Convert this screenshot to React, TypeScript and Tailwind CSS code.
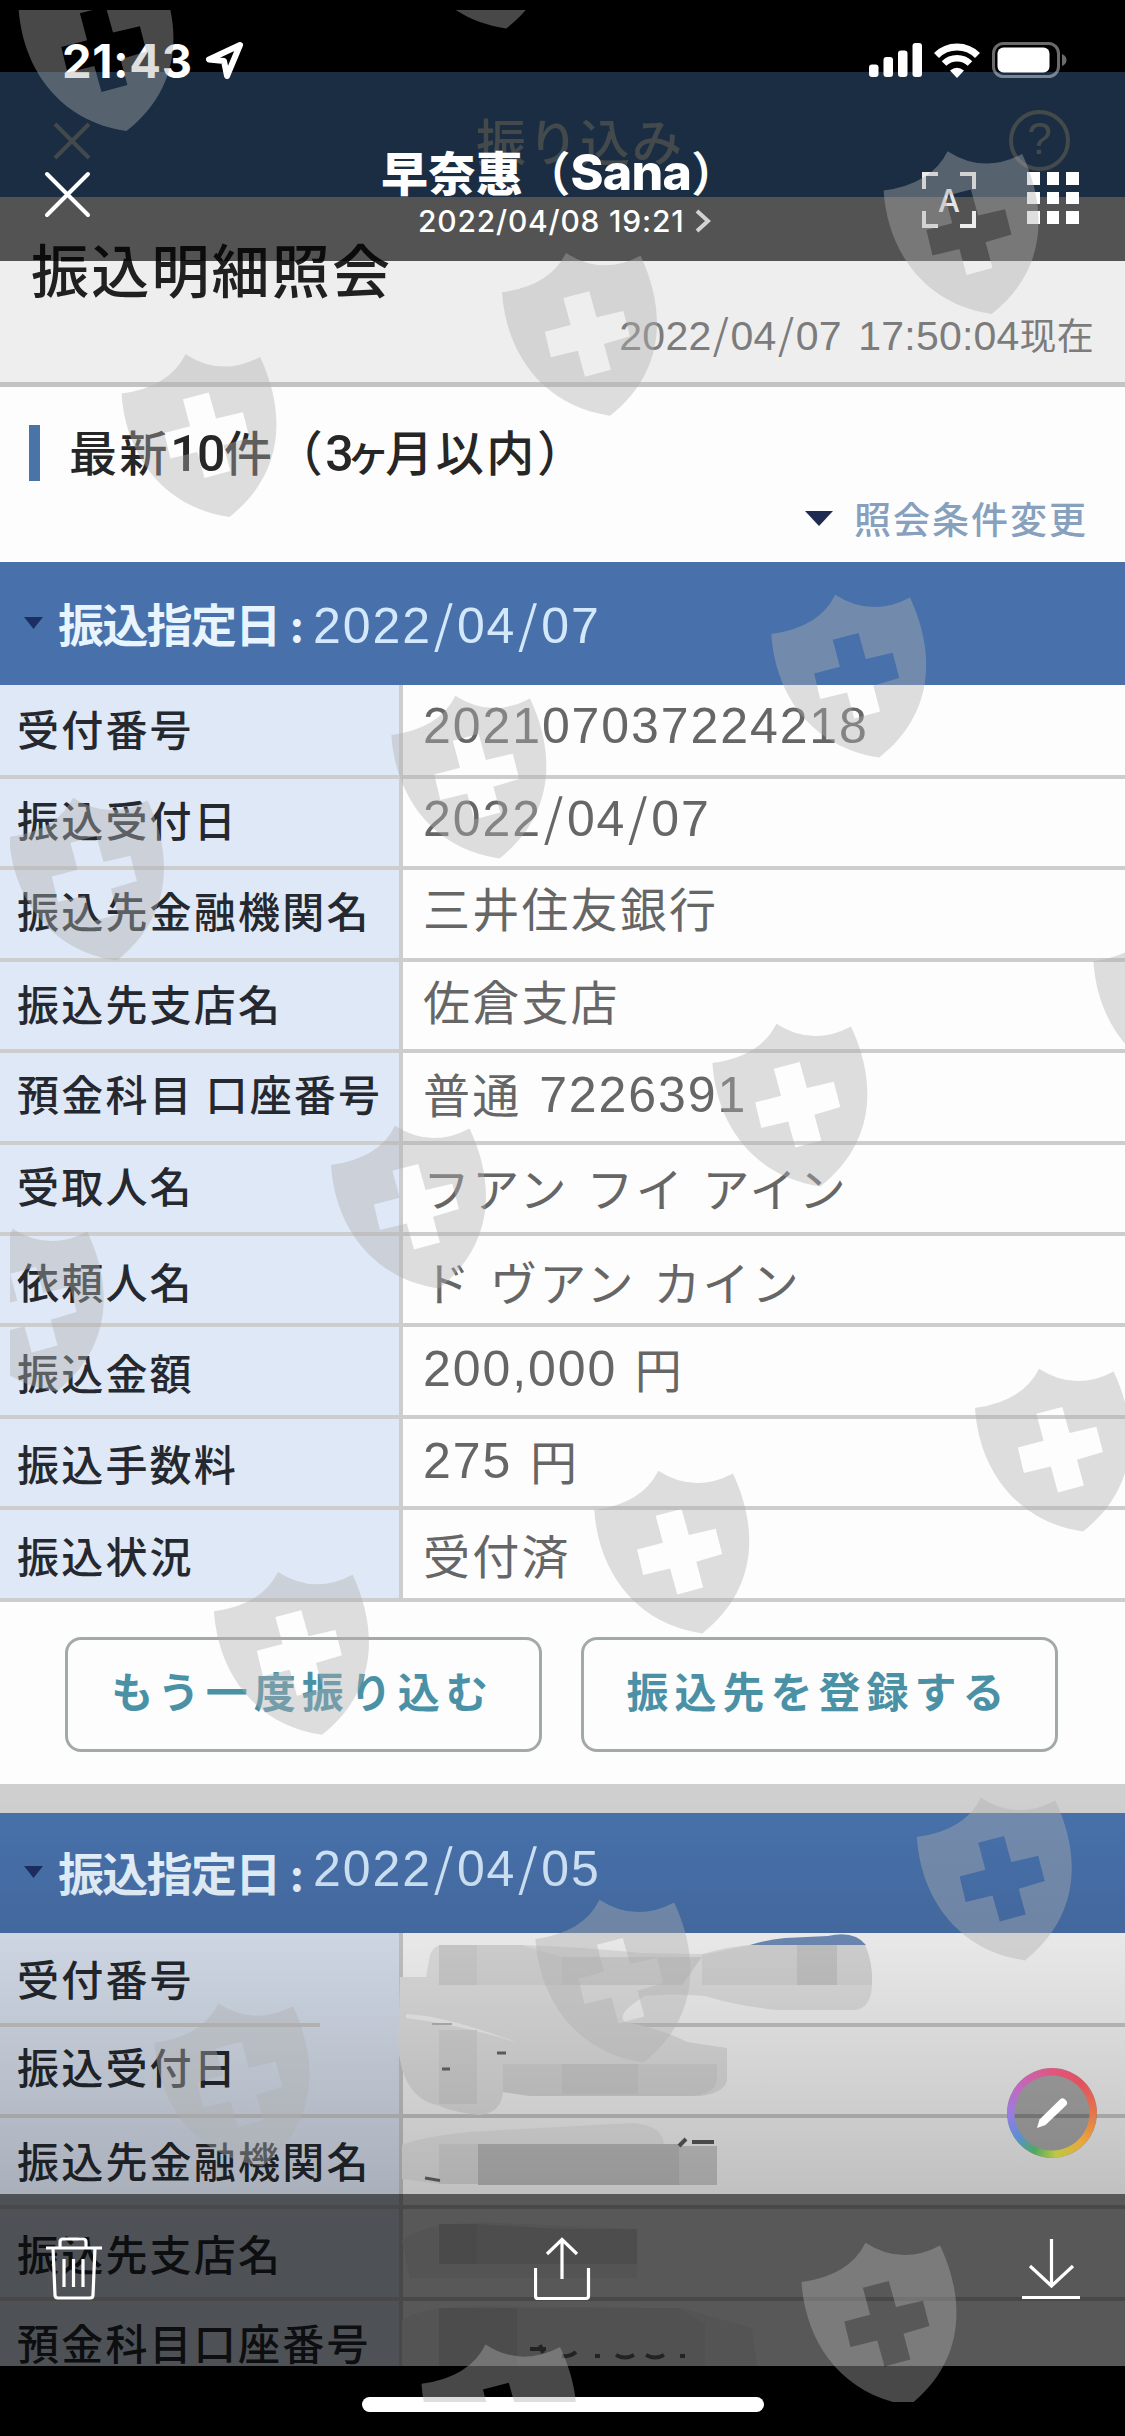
import React from "react"

interface Row {
	label: string
	value?: string
	labelShift?: string
	valueShift?: string
}

const JP = "font-['Noto_Sans_CJK_JP',sans-serif]"
const UI = "font-['Inter','Noto_Sans_CJK_JP',sans-serif]"

const firstRows: Row[] = [
	{ label: "受付番号", value: "202107037224218", labelShift: "pb-1", valueShift: "pb-2" },
	{ label: "振込受付日", value: "2022/04/07", labelShift: "pb-2", valueShift: "pb-3" },
	{ label: "振込先金融機関名", value: "三井住友銀行", labelShift: "pb-2", valueShift: "pb-3" },
	{ label: "振込先支店名", value: "佐倉支店", labelShift: "pb-1", valueShift: "pb-2" },
	{ label: "預金科目 口座番号", value: "普通 7226391", labelShift: "pb-2", valueShift: "pb-1" },
	{ label: "受取人名", value: "フアン フイ アイン", labelShift: "pb-1.5", valueShift: "pb-0" },
	{ label: "依頼人名", value: "ド ヴアン カイン", labelShift: "pt-0.5", valueShift: "pt-1.5" },
	{ label: "振込金額", value: "200,000 円", labelShift: "pt-0.5", valueShift: "pb-1" },
	{ label: "振込手数料", value: "275 円", labelShift: "pt-0.5", valueShift: "pb-0.5" },
	{ label: "振込状況", value: "受付済", labelShift: "pt-0.5", valueShift: "pt-1" },
]

const secondRows: Row[] = [
	{ label: "受付番号", labelShift: "pb-0" },
	{ label: "振込受付日", labelShift: "pb-2" },
	{ label: "振込先金融機関名", labelShift: "pb-1" },
	{ label: "振込先支店名", labelShift: "pb-0" },
	{ label: "預金科目口座番号", labelShift: "pb-1" },
]

// top-left corner of every watermark shield
const shields = [
	[18.5, 7.6],
	[398.3, -95],
	[883.6, 190.5],
	[502, 292.3],
	[121.5, 393.5],
	[771.3, 634],
	[391.4, 735],
	[9, 837],
	[1093.4, 961.2],
	[712.4, 1063],
	[331, 1165],
	[-51.3, 1268],
	[975, 1408],
	[594.3, 1510],
	[214, 1611.3],
	[916.8, 1837],
	[535.5, 1939],
	[154.4, 2042.8],
	[801.5, 2282],
	[421.5, 2383.7],
]

function Digits({ text }: { text: string }) {
	return (
		<>
			{text.split("").map((c, i) => (
				<span
					key={i}
					className={c === "/" ? "mx-[0.035em] font-['Noto_Sans_CJK_JP',sans-serif]" : ""}
				>
					{c}
				</span>
			))}
		</>
	)
}

function Value({ text }: { text: string }) {
	return (
		<span className="flex items-center whitespace-pre">
			{text.split(/([0-9,/]+)/).map((part, i) =>
				/[0-9]/.test(part) ? (
					<span
						key={i}
						className="font-['Liberation_Sans',sans-serif] text-[50px] leading-none tracking-[1.9px]"
					>
						<Digits text={part} />
					</span>
				) : (
					<span
						key={i}
						className={`${JP} pb-1 text-[47px] leading-none tracking-[2.2px] [word-spacing:5px]`}
					>
						{part}
					</span>
				)
			)}
		</span>
	)
}

function DateBar({
	date,
	height,
	dateShift,
}: {
	date: string
	height: string
	dateShift: string
}) {
	return (
		<div className={`flex items-center bg-[#4871ab] pl-6 ${height}`}>
			<svg className="-mt-0.5 h-3 w-[19px]" viewBox="0 0 19 12">
				<path d="M0 0h19L9.500 12z" fill="#1c2f63" />
			</svg>
			<span
				className={`${JP} ml-[15px] w-[224px] whitespace-nowrap pb-1 text-[46px] font-bold leading-none tracking-[-1.7px] text-[#e8f5ff]`}
			>
				振込指定日
			</span>
			<span className={`${JP} w-[31px] pl-[8px] text-[42px] font-bold leading-none text-[#e8f5ff]`}>
				:
			</span>
			<span
				className={`font-['Liberation_Sans',sans-serif] text-[50px] leading-none tracking-[1.9px] text-[#d3e8fb] ${dateShift}`}
			>
				<Digits text={date} />
			</span>
		</div>
	)
}

function Table({ rows }: { rows: Row[] }) {
	return (
		<div className="flex flex-col">
			{rows.map((row, i) => (
				<div
					key={row.label}
					className={`flex border-b-4 border-[#cdcdcd] ${i === 0 ? "h-[94px]" : "h-[91.4px]"}`}
				>
					<div
						className={`flex w-[403px] shrink-0 items-center border-r-4 border-[#cdcdcd] bg-[#dfe8f6] pl-[17px] ${row.labelShift}`}
					>
						<span
							className={`${JP} whitespace-nowrap text-[42px] font-medium leading-none tracking-[2.2px] text-[#25292f]`}
						>
							{row.label}
						</span>
					</div>
					<div
						className={`flex flex-1 items-center bg-[#fdfdfd] pl-5 text-[#666] ${row.valueShift}`}
					>
						{row.value && <Value text={row.value} />}
					</div>
				</div>
			))}
		</div>
	)
}

function Scribbles() {
	return (
		<svg
			className="absolute left-0 top-[120px] h-[433px] w-[1125px]"
			viewBox="0 1933 1125 433"
			fill="none"
		>
			<path d="M320 2016h80v14h-80z" fill="#dfe8f6" />
			<path
				d="M400 1977h26l4-22q4-10 12-10h80q60 2 120 8l60 1q28-8 49-9h114q8 18 7 40-1 24-18 25h-77q-40-4-72-14-30-3-60 0-30 18-20 26 40 8 62 20l40 6v33q-4 12-26 15H530l-27-4q-2 22-25 23-30-4-40-10-26-4-36-36l-4-20z"
				fill="#e8e8e8"
			/>
			<path d="M439 1945h38v40h-38zM562 1957h140l-20 28H562z" fill="#d6d6d6" />
			<path d="M477 1945h45l40 12v28h-85z" fill="#dedede" />
			<path d="M702 1955l48-10h47v40h-95z" fill="#dcdcdc" />
			<path d="M797 1945h40v40h-40z" fill="#cdcdcd" />
			<path d="M837 1945h28q8 18 7 40h-35z" fill="#dfdfdf" />
			<path d="M750 1945q16-5 35-7l43-2q26-6 38 9z" fill="#7391bd" />
			<path d="M406 2014q40 2 110 28-60-18-110-24z" fill="#fafafa" />
			<path d="M439 2030h38v74h-38z" fill="#dddddd" />
			<path d="M503 2064h214v17q-4 14-26 15H530l-27-4z" fill="#dedede" />
			<path d="M562 2064h76v30h-76z" fill="#d7d7d7" />
			<path d="M402 2145q30-12 100-15l130-7q32 2 32 23v38H440l-38-5z" fill="#f0f0f0" />
			<path d="M439 2144h39v40h-39z" fill="#e4e4e4" />
			<path d="M478 2144h201v41H478z" fill="#c5c5c5" />
			<path d="M679 2146h38v39h-38z" fill="#d2d2d2" />
			<path d="M664 2120h53v24h-53z" fill="#fdfdfd" />
			<path
				d="M679 2146l7-7M692 2142h22"
				stroke="#5c5c5c"
				strokeWidth="4"
			/>
			<path
				d="M425 2178l15 2.500M497 2053h9M442 2069h8"
				stroke="#6a6a6a"
				strokeWidth="3"
			/>
			<path d="M432 2024h20" stroke="#bdbdbd" strokeWidth="2" />
			<path d="M402 2240q20-16 80-18l155 7v49H410z" fill="#f0f0f0" />
			<path d="M439 2224h38v40h-38z" fill="#d4d4d4" />
			<path d="M477 2224l85 5h75v35H477z" fill="#dcdcdc" />
			<path d="M402 2320q20-14 80-14l200 2 70 20 5 38H402z" fill="#f0f0f0" />
			<path d="M439 2308h78v58h-78z" fill="#dadada" />
			<path d="M517 2308h160l28 16v42H517z" fill="#e8e8e8" />
			<path
				d="M530 2349h16M540 2345l3 8M562 2356q8 1 14-4M595 2356h5M616 2355q9 5 18 0M646 2355q9 5 18 0M680 2356h5"
				stroke="#666"
				strokeWidth="4"
			/>
		</svg>
	)
}

function StatusBar() {
	return (
		<div className="flex h-[120px] items-center pl-[62px] pr-[57px]">
			<span
				className={`${UI} w-[130px] text-[47px] font-bold leading-none tracking-[0.6px] text-white`}
			>
				21:43
			</span>
			<svg className="ml-[13px] h-10 w-10" viewBox="0 0 40 40" fill="none">
				<path
					d="M35 5L4 19.500l15 1.500 3 15z"
					stroke="#fff"
					strokeWidth="6"
					strokeLinejoin="round"
				/>
			</svg>
			<div className="ml-auto flex items-center">
				<svg className="h-[34px] w-[54px]" viewBox="0 0 54 34" fill="#fff">
					<rect x="0" y="21.500" width="9.500" height="12.500" rx="3" />
					<rect x="14.500" y="14" width="9.500" height="20" rx="3" />
					<rect x="29" y="7.500" width="9.500" height="26.500" rx="3" />
					<rect x="43.500" y="0" width="9.500" height="34" rx="3" />
				</svg>
				<svg className="ml-[11px] h-[35px] w-[46px]" viewBox="0 0 46 35" fill="none">
					<path d="M2.500 12.500a29 29 0 0 1 41 0" stroke="#fff" strokeWidth="7" />
					<path d="M10 20.500a18.500 18.500 0 0 1 26 0" stroke="#fff" strokeWidth="6.500" />
					<path d="M23 35l-7-7.500q7-5.500 14 0z" fill="#fff" />
				</svg>
				<svg className="ml-3 h-9 w-[76px]" viewBox="0 0 76 36" fill="none">
					<rect x="1.500" y="1.500" width="65" height="33" rx="10" stroke="#fff" strokeOpacity=".42" strokeWidth="3" />
					<rect x="5.500" y="5.500" width="52" height="25" rx="6" fill="#fff" />
					<path d="M70 12q4.500 2 4.500 6t-4.500 6z" fill="#fff" fillOpacity=".42" />
				</svg>
			</div>
		</div>
	)
}

function ViewerHeader() {
	return (
		<div className="absolute left-0 top-0 flex h-[261px] w-full flex-col bg-black/65">
			<StatusBar />
			<div className="grid h-[141px] grid-cols-[381px_1fr_203px] pt-[25px]">
				<svg className="ml-[43px] mt-[25px] h-[49px] w-[49px]" viewBox="0 0 49 49">
					<path d="M4 4l41 41M45 4L4 45" stroke="#fff" strokeWidth="4" strokeLinecap="round" />
				</svg>
				<div className="flex flex-col">
					<div className="flex h-[50px] items-center whitespace-nowrap text-white">
						<span className={`${JP} text-[47px] font-black leading-none tracking-[0.5px]`}>
							早奈惠
						</span>
						<span className={`${JP} text-[47px] font-bold leading-none`}>（</span>
						<span className={`${UI} pt-1 text-[50px] font-extrabold leading-none tracking-[-0.7px]`}>
							Sana
						</span>
						<span className={`${JP} text-[47px] font-bold leading-none`}>）</span>
					</div>
					<div className="ml-[37px] mt-[10px] flex h-8 items-center text-white">
						<span className={`${UI} text-[30px] font-medium leading-none tracking-[0.8px]`}>
							2022/04/08 19:21
						</span>
						<svg className="ml-[11px] h-6 w-4" viewBox="0 0 16 24" fill="none">
							<path d="M2 2l11 10L2 22" stroke="#d2d2d2" strokeWidth="4" />
						</svg>
					</div>
				</div>
				<div className="flex gap-[51px] pt-[27px]">
					<div className="grid h-[56px] w-[54px] shrink-0 place-items-center">
						<svg className="col-start-1 row-start-1 h-[56px] w-[54px]" viewBox="0 0 54 56" fill="none">
							<path
								d="M2 17V2h14M38 2h14v15M52 39v15H38M16 54H2V39"
								stroke="#ececec"
								strokeWidth="4"
							/>
						</svg>
						<span
							className={`${UI} col-start-1 row-start-1 text-[31px] font-medium leading-none text-[#e6e6e6]`}
						>
							A
						</span>
					</div>
					<div className="grid h-[52px] w-[52px] shrink-0 grid-cols-3 gap-[7px]">
						{[0, 1, 2, 3, 4, 5, 6, 7, 8].map((n) => (
							<div key={n} className="bg-white" />
						))}
					</div>
				</div>
			</div>
		</div>
	)
}

function Toolbar() {
	return (
		<div className="absolute left-0 top-[2194px] flex h-[172px] w-full items-start justify-between bg-black/65 pl-[45px] pr-[45px] pt-[43px]">
			<svg className="h-[64px] w-[58px]" viewBox="0 0 58 64" fill="none" stroke="#fff" strokeWidth="3.200">
				<path d="M1 11h56M15 11V5q0-3 3-3h20q3 0 3 3v6M8 11l2 47q0 3 3 3h32q3 0 3-3l2-47" />
				<path d="M19 22v28M28.500 22v28M38 22v28" />
			</svg>
			<svg className="h-[64px] w-[58px]" viewBox="0 0 58 64" fill="none" stroke="#fff" strokeWidth="3.200">
				<path d="M1.500 31v28q0 2.500 2.500 2.500h48q2.500 0 2.500-2.500V31M28 42V3M13 17L28 2.500 43 17" />
			</svg>
			<svg className="h-[64px] w-[58px]" viewBox="0 0 58 64" fill="none" stroke="#fff" strokeWidth="3.200">
				<path d="M0 60.500h58M29.500 2v48M8 29l21.500 20L51 29" />
			</svg>
		</div>
	)
}

function EditButton() {
	return (
		<div className="absolute left-[1007px] top-[2068px] grid h-[90px] w-[90px] place-items-center rounded-full bg-black/30">
			<div className="col-start-1 row-start-1 h-full w-full rounded-full bg-[conic-gradient(#e0567e,#e2525e_45deg,#e57a48_95deg,#e8a93c_135deg,#bcc843_175deg,#4fa862_205deg,#5a8fd6_235deg,#9c7be0_270deg,#c268bd_310deg,#e0567e)] [mask:radial-gradient(closest-side,transparent_37px,black_38px)]" />
			<svg className="col-start-1 row-start-1 h-8 w-8" viewBox="0 0 32 32" fill="#fff">
				<path d="M1 31l2.500-8.500L24.500 2q2-1.500 4 0l2 2q1.500 2 0 4L9.500 28z" />
			</svg>
		</div>
	)
}

function Watermark() {
	return (
		<svg
			className="pointer-events-none absolute left-[10px] top-[10px] h-[2392px] w-[1115px]"
			viewBox="10 10 1115 2392"
			fill="#b0b0b0"
			fillOpacity=".41"
		>
			{shields.map(([x, y]) => (
				<path
					key={`${x}-${y}`}
					transform={`translate(${x} ${y})`}
					fillRule="evenodd"
					d="M0 0Q48-6.500 64-39.300 100-16 138.600-36.600C166 22 161 82 108 123.400 42 114 4 62 0 0zM61.400 5.700L87.300-1 94.500 25 121.400 18.700 127.900 44 102 51.700 108.900 77.400 83 84.400 75.800 58.400 48.900 65 42.800 39.400 68.600 32.700z"
				/>
			))}
		</svg>
	)
}

export default function App() {
	return (
		<div className="relative h-[2436px] w-[1125px] overflow-hidden bg-black">
			<div className="mt-[72px] flex h-[2294px] flex-col overflow-hidden bg-[#fdfdfd]">
				<div className="flex h-[125px] shrink-0 items-center bg-[#4a81bf] pl-[53px] pr-[55px] pt-[12px]">
					<svg className="h-[38px] w-[38px]" viewBox="0 0 38 38">
						<path d="M2 2l34 34M36 2L2 36" stroke="#c2d2da" strokeWidth="4" />
					</svg>
					<span
						className={`${JP} ml-[385px] pb-1 text-[50px] font-medium leading-none tracking-[2px] text-[#c2d2da]`}
					>
						振り込み
					</span>
					<div className="ml-auto grid h-[61px] w-[61px] place-items-center rounded-full border-[4px] border-[#c2d2da] pb-1 font-['Liberation_Sans',sans-serif] text-[44px] leading-none text-[#c2d2da]">
						?
					</div>
				</div>

				<div className="flex h-[190px] shrink-0 flex-col border-b-[5px] border-[#c3c3c3] bg-[#eeeeee]">
					<h1
						className={`${JP} mt-[42px] pl-[31px] text-[58px] font-medium leading-none tracking-[2.200px] text-[#202020]`}
					>
						振込明細照会
					</h1>
					<div className="mt-[15px] flex items-center justify-end whitespace-pre pr-[31px] font-['Liberation_Sans',sans-serif] text-[41px] leading-none tracking-[0.200px] text-[#7c7c7c] [word-spacing:5px]">
						<span>
							<Digits text="2022/04/07 17:50:04" />
						</span>
						<span className="font-['Noto_Sans_CJK_SC',sans-serif] text-[37px]">现在</span>
					</div>
				</div>

				<div className="flex h-[175px] shrink-0 flex-col">
					<div className="mt-[38px] flex h-[56px] items-center">
						<div className="ml-[29px] h-full w-[11px] bg-[#4a74a8]" />
						<h2
							className={`${JP} ml-[29px] whitespace-nowrap pb-0.5 text-[48px] font-medium leading-none tracking-[2.600px] text-[#262626]`}
						>
							最新
							<span className="font-['Roboto',sans-serif] text-[50px] tracking-[-1.500px]">10</span>
							件（
							<span className="font-['Roboto',sans-serif] text-[50px] tracking-[-1.500px]">3</span>
							<span className="-ml-[6px] -mr-[5px] text-[44px] tracking-normal">ヶ</span>月以内）
						</h2>
					</div>
					<div className="mt-[19px] flex items-center justify-end pr-[37px]">
						<svg className="h-[15px] w-7" viewBox="0 0 28 15">
							<path d="M0 0h28L14 15z" fill="#1f2b50" />
						</svg>
						<a
							className={`${JP} ml-[21px] text-[37px] font-medium leading-none tracking-[2px] text-[#86a0bd]`}
						>
							照会条件変更
						</a>
					</div>
				</div>

				<section className="shrink-0">
					<DateBar date="2022/04/07" height="h-[123px]" dateShift="pt-0" />
					<Table rows={firstRows} />
					<div className="flex gap-[39px] px-[65px] pb-[32px] pt-[35px]">
						{["もう一度振り込む", "振込先を登録する"].map((text) => (
							<button
								key={text}
								className={`${JP} h-[115px] w-[477px] whitespace-nowrap rounded-2xl border-[3px] border-[#a3a9a9] pb-2 pr-0.5 text-[42px] font-bold leading-none tracking-[6px] text-[#4b91a6]`}
							>
								{text}
							</button>
						))}
					</div>
				</section>

				<div className="h-[29px] shrink-0 bg-[#cfcfcf]" />

				<section className="relative shrink-0">
					<DateBar date="2022/04/05" height="h-[120px]" dateShift="pb-3" />
					<Table rows={secondRows} />
					<Scribbles />
				</section>
			</div>

			<div className="absolute left-0 top-[1800px] h-[394px] w-full bg-linear-to-b from-transparent to-black/24" />
			<ViewerHeader />
			<Toolbar />
			<EditButton />
			<div className="absolute left-[362px] top-[2397px] h-[15px] w-[402px] rounded-full bg-white" />
			<Watermark />
		</div>
	)
}
